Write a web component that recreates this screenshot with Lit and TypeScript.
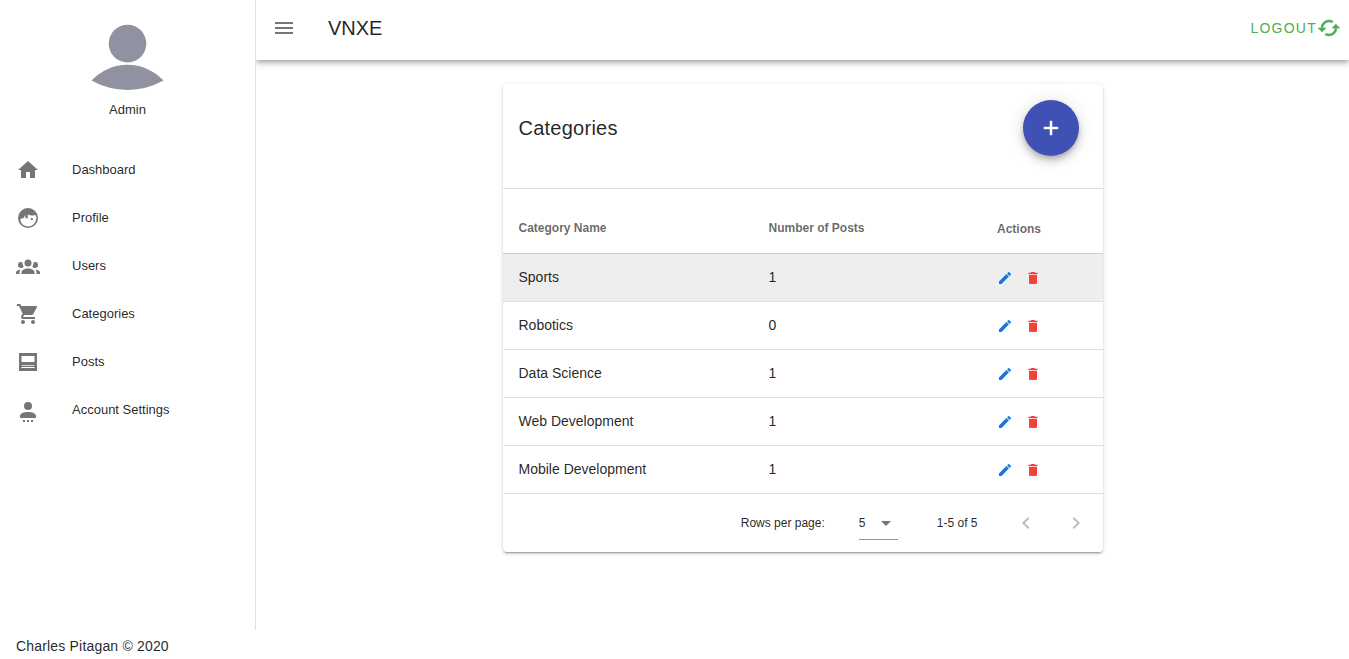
import { LitElement, html, css, svg } from "lit";
import { customElement, property } from "lit/decorators.js";

const ICONS: Record<string, string> = {
  home: "M10,20V14H14V20H19V12H22L12,3L2,12H5V20H10Z",
  face: "M12,2A10,10 0 0,0 2,12A10,10 0 0,0 12,22A10,10 0 0,0 22,12A10,10 0 0,0 12,2M12,20.4C8,20.4 4.8,17.6 4.3,13.8L5.5,12.2H7.6L9.4,8.8V12.2H11.8V8.4C14,9.5 17,9.6 19.6,9.3C20.5,10.8 20.4,12 20.2,13.2C19.4,17.4 16,20.4 12,20.4M14.8,12V13.9H16.8V12H14.8Z",
  group: "M12,5.5A3.5,3.5 0 0,1 15.5,9A3.5,3.5 0 0,1 12,12.5A3.5,3.5 0 0,1 8.5,9A3.5,3.5 0 0,1 12,5.5M5,8C5.56,8 6.08,8.15 6.53,8.42C6.38,9.85 6.8,11.27 7.66,12.38C7.16,13.34 6.16,14 5,14A3,3 0 0,1 2,11A3,3 0 0,1 5,8M19,8A3,3 0 0,1 22,11A3,3 0 0,1 19,14C17.84,14 16.84,13.34 16.34,12.38C17.2,11.27 17.62,9.85 17.47,8.42C17.92,8.15 18.44,8 19,8M5.5,18.25C5.5,16.18 8.41,14.5 12,14.5C15.59,14.5 18.5,16.18 18.5,18.25V20H5.5V18.25M0,20V18.5C0,17.11 1.89,15.94 4.45,15.6C3.86,16.28 3.5,17.22 3.5,18.25V20H0M24,20H20.5V18.25C20.5,17.22 20.14,16.28 19.55,15.6C22.11,15.94 24,17.11 24,18.5V20Z",
  cart: "M17,18C15.89,18 15,18.89 15,20A2,2 0 0,0 17,22A2,2 0 0,0 19,20C19,18.89 18.1,18 17,18M1,2V4H3L6.6,11.59L5.24,14.04C5.09,14.32 5,14.65 5,15A2,2 0 0,0 7,17H19V15H7.42A0.25,0.25 0 0,1 7.17,14.75C7.17,14.7 7.18,14.66 7.2,14.63L8.1,13H15.55C16.3,13 16.96,12.58 17.3,11.97L20.88,5.5C20.95,5.34 21,5.17 21,5A1,1 0 0,0 20,4H5.21L4.27,2M7,18C5.89,18 5,18.89 5,20A2,2 0 0,0 7,22A2,2 0 0,0 9,20C9,18.89 8.1,18 7,18Z",
  posts: "M3,3V21H21V3M18.5,12H5.5V6H18.5M18.5,15.8H5.5V15H18.5M18.5,18H5.5V17H18.5",
  account: "M12,4A4,4 0 0,1 16,8A4,4 0 0,1 12,12A4,4 0 0,1 8,8A4,4 0 0,1 12,4M12,14C16.42,14 20,15.6 20,17.8V20H4V17.8C4,15.6 7.58,14 12,14M7,24V22H9V24H7M11,24V22H13V24H11M15,24V22H17V24H15Z",
  menu: "M3,6H21V8H3V6M3,11H21V13H3V11M3,16H21V18H3V16Z",
  cached: "M19,8L15,12H18A6,6 0 0,1 12,18C11,18 10.03,17.75 9.2,17.3L7.74,18.76C8.97,19.54 10.43,20 12,20A8,8 0 0,0 20,12H23M6,12A6,6 0 0,1 12,6C13,6 13.97,6.25 14.8,6.7L16.26,5.24C15.03,4.46 13.57,4 12,4A8,8 0 0,0 4,12H1L5,16L9,12Z",
  plus: "M19,13H13V19H11V13H5V11H11V5H13V11H19V13Z",
  pencil: "M20.71,7.04C21.1,6.65 21.1,6 20.71,5.63L18.37,3.29C18,2.9 17.35,2.9 16.96,3.29L15.12,5.12L18.87,8.87M3,17.25V21H6.75L17.81,9.93L14.06,6.18L3,17.25Z",
  trash: "M19,4H15.5L14.5,3H9.5L8.5,4H5V6H19M6,19A2,2 0 0,0 8,21H16A2,2 0 0,0 18,19V7H6V19Z",
  down: "M7,10L12,15L17,10H7Z",
  left: "M15.41,16.58L10.83,12L15.41,7.41L14,6L8,12L14,18L15.41,16.58Z",
  right: "M8.59,16.58L13.17,12L8.59,7.41L10,6L16,12L10,18L8.59,16.58Z",
};

@customElement("md-icon")
export class MdIcon extends LitElement {
  @property() name = "";

  static styles = css`
    :host { display: block; flex: none; width: 24px; height: 24px; }
    svg { display: block; width: 100%; height: 100%; fill: currentColor; overflow: visible; }
    .cached, .plus { stroke: currentColor; stroke-width: 0.5; }
  `;

  render() {
    return html`<svg class=${this.name} viewBox="0 0 24 24">${svg`<path fill-rule="evenodd" d=${ICONS[this.name] ?? ""}></path>`}</svg>`;
  }
}

const NAV = [
  ["home", "Dashboard"],
  ["face", "Profile"],
  ["group", "Users"],
  ["cart", "Categories"],
  ["posts", "Posts"],
  ["account", "Account Settings"],
];

const ROWS: [string, number][] = [
  ["Sports", 1],
  ["Robotics", 0],
  ["Data Science", 1],
  ["Web Development", 1],
  ["Mobile Development", 1],
];

@customElement("app-root")
export class AppRoot extends LitElement {
  static styles = css`
    :host {
      display: flex; flex-direction: column; height: 659px; overflow: hidden;
      background: #fff; color: rgba(0, 0, 0, 0.87);
      font-family: "Liberation Sans", Arial, sans-serif; font-size: 14px;
    }
    * { box-sizing: border-box; }
    .body { display: flex; height: 630px; flex: none; }
    .side {
      width: 256px; flex: none; border-right: 1px solid #e0e0e0; background: #fff;
      display: flex; flex-direction: column; z-index: 2;
    }
    .user { height: 146px; padding-top: 24px; display: flex; flex-direction: column; align-items: center; }
    .avatar { width: 73px; height: 67px; display: block; fill: #9092a2; }
    .user-name { margin-top: 9px; font-size: 13px; line-height: 20px; }
    .item { height: 48px; padding: 0 16px; display: flex; align-items: center; font-size: 13px; }
    .item md-icon { color: #757575; margin-right: 32px; }
    .item span { line-height: 20px; padding-bottom: 1px; }
    .main { flex: 1; display: flex; flex-direction: column; align-items: center; }
    .bar {
      width: 100%; height: 60px; flex: none; padding: 0 8px 4px 16px; display: flex; align-items: center;
      box-shadow: 0 2px 4px -1px rgba(0,0,0,.2), 0 4px 5px 0 rgba(0,0,0,.14), 0 1px 10px 0 rgba(0,0,0,.12);
    }
    .bar > md-icon { color: #757575; }
    .brand { margin-left: 32px; font-size: 20px; line-height: 30px; flex: 1; }
    .logout { display: flex; align-items: center; color: #4caf50; letter-spacing: 1.25px; }
    .card {
      width: 600px; height: 468px; margin-top: 24px; border-radius: 4px; background: #fff; overflow: hidden;
      box-shadow: 0 3px 1px -2px rgba(0,0,0,.2), 0 2px 2px 0 rgba(0,0,0,.14), 0 1px 5px 0 rgba(0,0,0,.12);
    }
    .head {
      height: 105px; padding: 16px 24px 0 16px; border-bottom: 1px solid #e0e0e0;
      display: flex; justify-content: space-between; align-items: flex-start;
    }
    .title { font-size: 20px; line-height: 56px; letter-spacing: .25px; }
    .fab {
      width: 56px; height: 56px; border-radius: 50%; background: #3f51b5; color: #fff;
      display: flex; align-items: center; justify-content: center;
      box-shadow: 0 3px 5px -1px rgba(0,0,0,.2), 0 6px 10px 0 rgba(0,0,0,.14), 0 1px 18px 0 rgba(0,0,0,.12);
    }
    .row {
      display: grid; grid-template-columns: 250px 228.5px 1fr; align-items: center;
      height: 48px; padding: 0 0 2px 16px; border-bottom: 1px solid #e0e0e0;
    }
    .row.first { background: #eee; }
    .row.labels {
      height: 65px; padding-top: 14px; padding-bottom: 0; font-size: 12px; font-weight: bold;
      color: rgba(0,0,0,.6); border-bottom-color: #d0d0d0;
    }
    .low { padding-top: 2px; }
    .actions { display: flex; gap: 12px; padding-top: 2px; }
    .actions md-icon { width: 16px; height: 16px; }
    .edit { color: #1976d2; }
    .del { color: #f44336; }
    .pager { height: 58px; display: flex; align-items: center; justify-content: flex-end; padding-right: 15px; font-size: 12px; }
    .select {
      width: 39px; height: 33px; margin: 1px 39px 0 34px; border-bottom: 1px solid #949494;
      display: flex; align-items: center; justify-content: space-between;
    }
    .select md-icon { color: #757575; }
    .range { margin-right: 36px; }
    .arrow { color: rgba(0,0,0,.26); }
    .arrow + .arrow { margin-left: 26px; }
    .foot { padding: 0 16px; line-height: 32px; letter-spacing: .18px; }
  `;

  render() {
    return html`
      <div class="body">
        <nav class="side">
          <div class="user">
            <svg class="avatar" viewBox="0 0 73 67">
              <circle cx="36.5" cy="19.6" r="18.8"></circle>
              <path d="M0.5 56.6A49 49 0 0 1 72.5 56.6A74 74 0 0 1 0.5 56.6Z"></path>
            </svg>
            <div class="user-name">Admin</div>
          </div>
          ${NAV.map(([icon, label]) => html`<div class="item"><md-icon name=${icon}></md-icon><span>${label}</span></div>`)}
        </nav>
        <div class="main">
          <header class="bar">
            <md-icon name="menu"></md-icon>
            <div class="brand">VNXE</div>
            <div class="logout">LOGOUT<md-icon name="cached"></md-icon></div>
          </header>
          <section class="card">
            <div class="head">
              <div class="title">Categories</div>
              <div class="fab"><md-icon name="plus"></md-icon></div>
            </div>
            <div class="row labels">
              <span>Category Name</span><span>Number of Posts</span><span class="low">Actions</span>
            </div>
            ${ROWS.map(([name, posts], i) => html`
              <div class="row ${i === 0 ? "first" : ""}">
                <span>${name}</span><span>${posts}</span>
                <div class="actions">
                  <md-icon class="edit" name="pencil"></md-icon>
                  <md-icon class="del" name="trash"></md-icon>
                </div>
              </div>`)}
            <div class="pager">
              <span>Rows per page:</span>
              <div class="select"><span>5</span><md-icon name="down"></md-icon></div>
              <span class="range">1-5 of 5</span>
              <md-icon class="arrow" name="left"></md-icon>
              <md-icon class="arrow" name="right"></md-icon>
            </div>
          </section>
        </div>
      </div>
      <footer class="foot">Charles Pitagan © 2020</footer>
    `;
  }
}
